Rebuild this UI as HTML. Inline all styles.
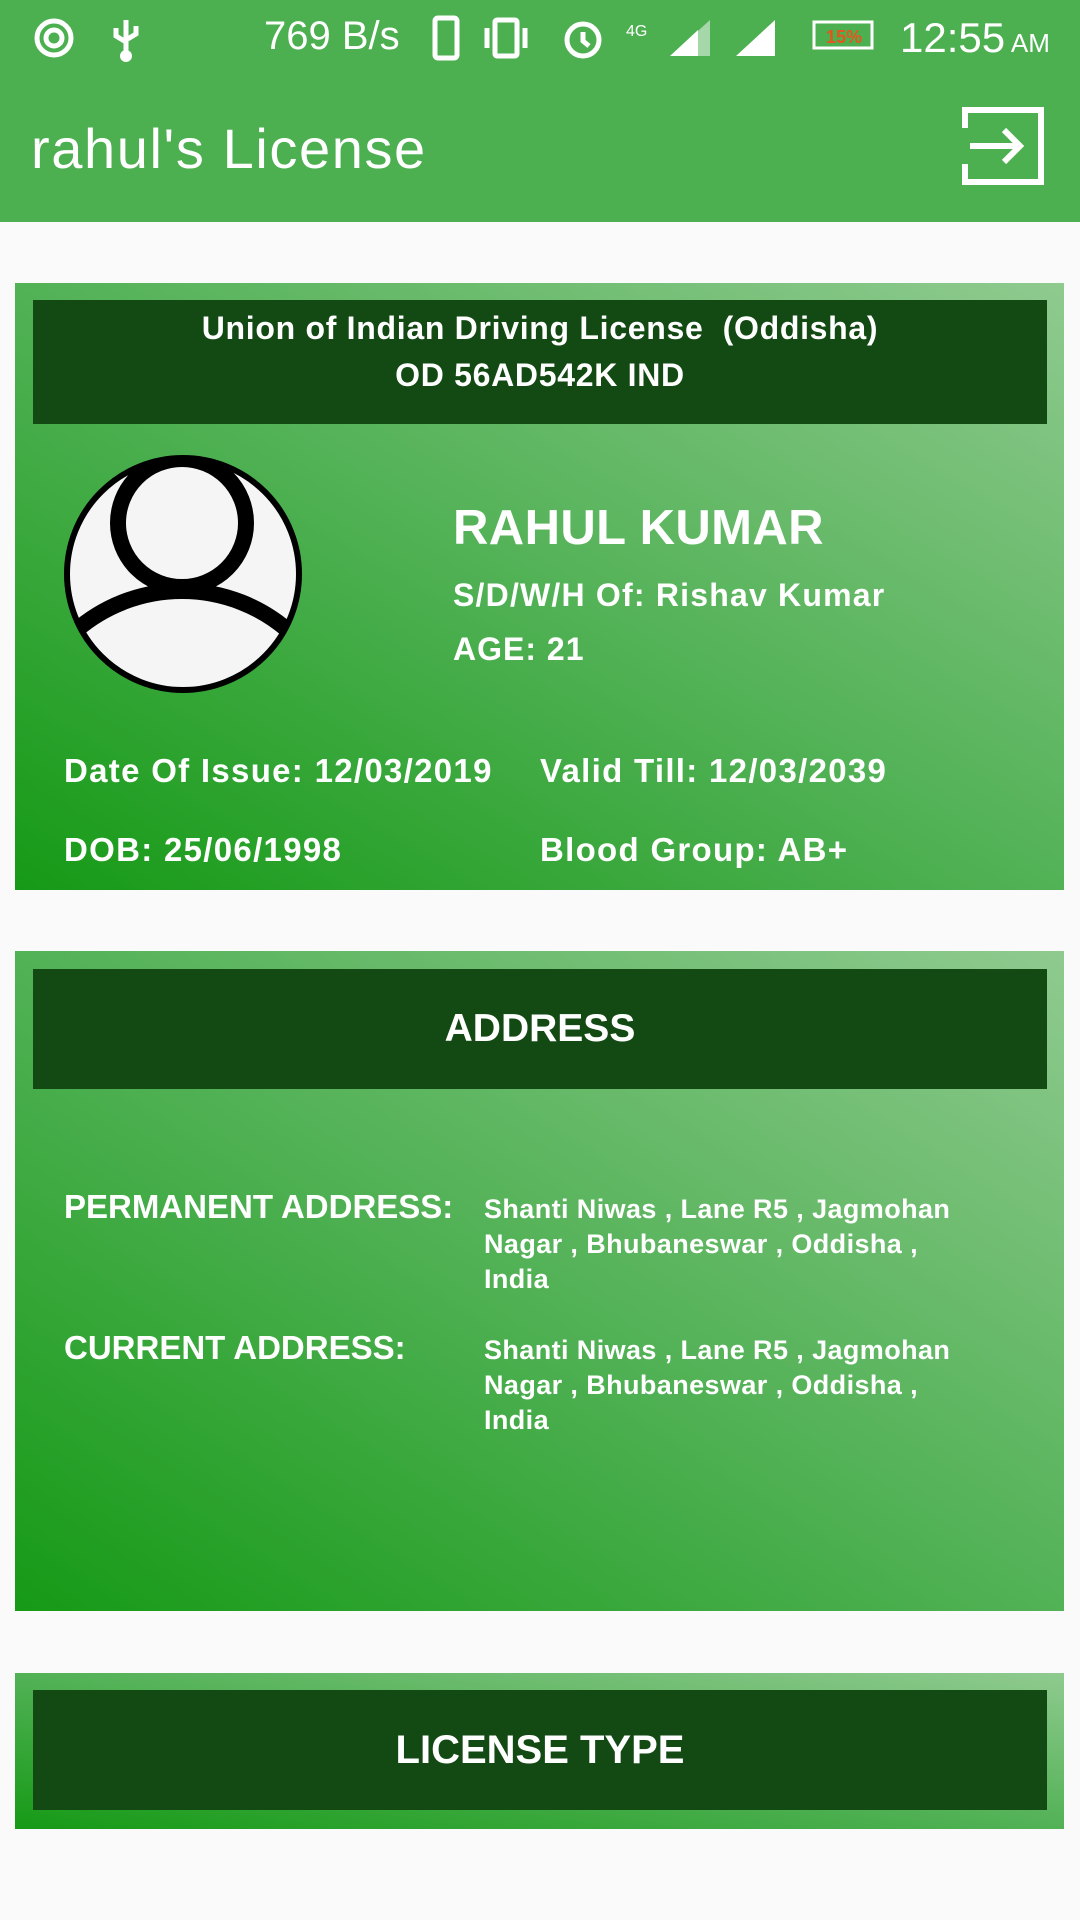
<!DOCTYPE html>
<html><head><meta charset="utf-8"><style>
*{margin:0;padding:0;box-sizing:border-box}
body{width:1080px;height:1920px;background:#fafafa;font-family:"Liberation Sans",sans-serif;position:relative;overflow:hidden;color:#fff}
.top{position:absolute;left:0;top:0;width:1080px;height:222px;background:#4caf50}
.abs{position:absolute;white-space:nowrap}
.card{position:absolute;left:15px;width:1049px;background:linear-gradient(to top right,#169a16 0%,#4caf50 45%,#8fca8f 100%)}
.hd{position:absolute;left:18px;width:1014px;background:#134a14;text-align:center;font-weight:bold}
.b{font-weight:bold}
.d{font-size:33px;letter-spacing:1.3px}
</style></head><body>
<div class="top"></div>
<div class="abs" style="left:264px;top:14px;font-size:40px">769 B/s</div>
<div class="abs" style="left:900px;top:14px;font-size:42px">12:55<span style="font-size:26px"> AM</span></div>
<svg class="abs" style="left:30px;top:14px" width="760" height="50" viewBox="0 0 760 50">
<g fill="none" stroke="#fff" stroke-width="5"><circle cx="24" cy="24" r="17"/><circle cx="24" cy="24" r="8"/>
<path d="M96 6v36M86 14v8l10 6M106 12v8l-10 6"/><rect x="405" y="4" width="22" height="40" rx="3"/><rect x="465" y="6" width="22" height="36" rx="2"/><path d="M457 14v20M495 14v20"/><circle cx="553" cy="26" r="16"/><path d="M553 18v9l6 5"/></g>
<circle cx="96" cy="42" r="6" fill="#fff"/>
<text x="596" y="22" font-size="16" fill="#fff" font-family="Liberation Sans">4G</text>
<path d="M640 42L680 6v36z" fill="#fff" opacity=".5"/><path d="M640 42L668 16v26z" fill="#fff"/>
<path d="M706 42L745 6v36z" fill="#fff"/>
</svg>
<svg class="abs" style="left:812px;top:20px" width="64" height="32"><rect x="2" y="2" width="58" height="26" fill="none" stroke="#fff" stroke-width="3"/><text x="14" y="23" font-size="18" fill="#e8541c" font-weight="bold" font-family="Liberation Sans">15%</text></svg>
<div class="abs" style="left:31px;top:116px;font-size:56px;letter-spacing:1.6px">rahul's License</div>
<svg class="abs" style="left:962px;top:106px" width="84" height="80" viewBox="0 0 84 80"><path d="M3 22V4h76v72H3V58" fill="none" stroke="#fff" stroke-width="6"/><path d="M8 40h48M42 24l16 16-16 16" fill="none" stroke="#fff" stroke-width="6"/></svg>

<div class="card" style="top:283px;height:607px">
<div class="hd" style="top:17px;height:124px;font-size:32px;line-height:47px;padding-top:5px;letter-spacing:0.7px">Union of Indian Driving License&nbsp; (Oddisha)<br>OD 56AD542K IND</div>
</div>
<svg class="abs" style="left:62px;top:453px" width="242" height="242" viewBox="0 0 242 242">
<defs><clipPath id="c"><circle cx="121" cy="121" r="114"/></clipPath></defs>
<circle cx="121" cy="121" r="116" fill="#f5f5f5" stroke="#000" stroke-width="6"/>
<g clip-path="url(#c)" fill="none" stroke="#000" stroke-width="16"><circle cx="120" cy="70" r="64"/><circle cx="120" cy="300" r="162"/></g>
</svg>
<div class="abs b" style="left:453px;top:500px;font-size:49px;letter-spacing:0.4px">RAHUL KUMAR</div>
<div class="abs b" style="left:453px;top:577px;font-size:32px;letter-spacing:1.2px">S/D/W/H Of: Rishav Kumar</div>
<div class="abs b" style="left:453px;top:631px;font-size:32px;letter-spacing:1px">AGE: 21</div>
<div class="abs b d" style="left:64px;top:752px">Date Of Issue: 12/03/2019</div>
<div class="abs b d" style="left:540px;top:752px">Valid Till: 12/03/2039</div>
<div class="abs b d" style="left:64px;top:831px">DOB: 25/06/1998</div>
<div class="abs b d" style="left:540px;top:831px">Blood Group: AB+</div>

<div class="card" style="top:951px;height:660px">
<div class="hd" style="top:18px;height:120px;font-size:39px;line-height:120px">ADDRESS</div>
</div>
<div class="abs b" style="left:64px;top:1188px;font-size:33px">PERMANENT ADDRESS:</div>
<div class="abs b" style="left:484px;top:1192px;font-size:27px;line-height:35px;letter-spacing:0.4px">Shanti Niwas , Lane R5 , Jagmohan<br>Nagar , Bhubaneswar , Oddisha ,<br>India</div>
<div class="abs b" style="left:64px;top:1329px;font-size:33px">CURRENT ADDRESS:</div>
<div class="abs b" style="left:484px;top:1333px;font-size:27px;line-height:35px;letter-spacing:0.4px">Shanti Niwas , Lane R5 , Jagmohan<br>Nagar , Bhubaneswar , Oddisha ,<br>India</div>

<div class="card" style="top:1673px;height:156px">
<div class="hd" style="top:17px;height:120px;font-size:40px;line-height:120px">LICENSE TYPE</div>
</div>
</body></html>
